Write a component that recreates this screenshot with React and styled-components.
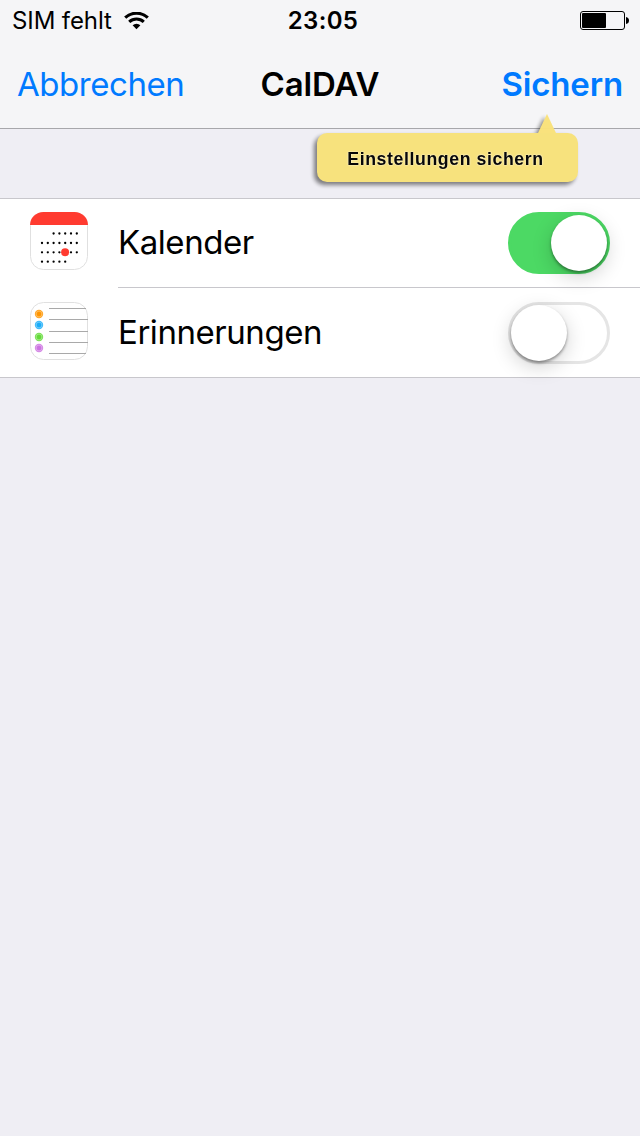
import React, { useState } from 'react';
import styled, { createGlobalStyle } from 'styled-components';

const GlobalStyle = createGlobalStyle`
* {
box-sizing: border-box;
}
body {
margin: 0;
background-color: #EFEEF4;
font-family: Inter, 'Liberation Sans', sans-serif;
color: #000000;
}
`

const Screen = styled.div`
display: flex;
flex-direction: column;
width: 640px;
min-height: 1136px;
background-color: #EFEEF4;
`

const Header = styled.header`
position: relative;
height: 129px;
background-color: #F5F5F7;
border-bottom: 1px solid #A7A7AB;
`

const StatusBar = styled.div`
display: grid;
grid-template-columns: 1fr auto 1fr;
align-items: center;
height: 40px;
padding: 0 11px 0 12px;
`

const Carrier = styled.div`
display: flex;
align-items: center;
gap: 12px;
padding-top: 1px;
font-size: 24px;
line-height: 40px;
letter-spacing: -0.1px;
`

const Clock = styled.div`
padding: 1px 0 0 5px;
font-size: 24px;
font-weight: 580;
line-height: 40px;
letter-spacing: 0.35px;
`

const Battery = styled.svg`
justify-self: end;
`

const NavBar = styled.nav`
display: grid;
grid-template-columns: 1fr auto 1fr;
align-items: center;
height: 88px;
padding: 0 17px;
`

const NavButton = styled.button`
justify-self: ${props => props.$end ? 'end' : 'start'};
padding: 0;
border: 0;
background: none;
color: #007AFF;
font-family: inherit;
font-size: 33px;
font-weight: ${props => props.$end ? 600 : 400};
line-height: 40px;
letter-spacing: ${props => props.$end ? '-0.15px' : '-0.45px'};
`

const Title = styled.h1`
margin: 0;
font-size: 33px;
font-weight: 600;
line-height: 40px;
letter-spacing: -0.2px;
`

const Hint = styled.div`
position: absolute;
left: 317px;
top: 114px;
width: 261px;
opacity: 0.97;
filter: drop-shadow(-3px 3px 2px rgba(0, 0, 0, 0.5));
`

const HintArrow = styled.div`
width: 18px;
height: 19px;
margin-left: 221px;
background-color: #FAE27A;
clip-path: polygon(50% 0, 100% 100%, 0 100%);
`

const HintBody = styled.div`
height: 49px;
padding-right: 4px;
border-radius: 10px;
background-color: #F8E27A;
font-family: 'Liberation Sans', Arial, sans-serif;
font-size: 17.7px;
font-weight: bold;
line-height: 53px;
letter-spacing: 0.6px;
text-align: center;
text-shadow: 0 0 2px #FFFFFF;
`

const List = styled.div`
margin-top: 69px;
background-color: #FFFFFF;
border-top: 1px solid #C8C7CC;
border-bottom: 1px solid #C8C7CC;
`

const Row = styled.div`
display: flex;
align-items: stretch;
height: 89px;
padding-left: 30px;
`

const RowIcon = styled.svg`
flex: none;
margin-top: ${props => props.$top};
`

const RowContent = styled.div`
display: flex;
flex: 1;
justify-content: space-between;
align-items: center;
margin-left: 30px;
padding-right: 30px;
border-bottom: ${props => props.$last ? 'none' : '1px solid #C8C7CC'};
`

const RowLabel = styled.span`
padding-bottom: 2px;
font-size: 33px;
line-height: 40px;
letter-spacing: -0.45px;
`

const Switch = styled.button`
display: flex;
align-items: center;
justify-content: ${props => props.$on ? 'flex-end' : 'flex-start'};
width: 102px;
height: 62px;
padding: 0;
border: 3px solid ${props => props.$on ? '#4CD964' : '#E5E5E5'};
border-radius: 31px;
background-color: ${props => props.$on ? '#4CD964' : '#FFFFFF'};
`

const Knob = styled.span`
width: 56px;
height: 56px;
border-radius: 50%;
background-color: #FFFFFF;
box-shadow: 0 6px 20px rgba(0, 0, 0, 0.18), 0 2px 3px rgba(0, 0, 0, 0.38);
`

// [row y, first column, number of dots]
const dotRows = [
    [21.5, 2, 5],
    [31, 0, 7],
    [40.3, 0, 7],
    [49.7, 0, 5]
];

const reminders = [
    { y: 12, color: '#FF9500' },
    { y: 23, color: '#1BADF8' },
    { y: 35, color: '#63DA38' },
    { y: 46, color: '#CC73E1' }
];

function WifiIcon() {
    return (
        <svg width="25" height="18" viewBox="0 0 25 18">
            <path d="M1.2 5.7 A16.4 16.4 0 0 1 23.8 5.7" fill="none" stroke="#000" strokeWidth="3.1" />
            <path d="M5.2 9.9 A10.6 10.6 0 0 1 19.8 9.9" fill="none" stroke="#000" strokeWidth="3" />
            <path d="M12.5 17.3 L8.6 13.3 A5.7 5.7 0 0 1 16.4 13.3 Z" />
        </svg>
    )
}

function BatteryIcon() {
    return (
        <Battery width="49" height="19" viewBox="0 0 49 19">
            <rect x="0.5" y="0.5" width="44" height="18" rx="2.5" fill="none" stroke="#000" />
            <rect x="2" y="2" width="24" height="15" rx="1" />
            <path d="M46 6 Q49 6.5 49 9.5 Q49 12.5 46 13 Z" />
        </Battery>
    )
}

function CalendarIcon() {
    return (
        <RowIcon $top="13px" width="58" height="58" viewBox="0 0 58 58">
            <rect x="0.5" y="0.5" width="57" height="57" rx="13" fill="#FFF" stroke="#E0E0E0" />
            <path d="M0 13 A13.5 13 0 0 1 13.5 0 H44.5 A13.5 13 0 0 1 58 13 Z" fill="#FF3B30" />
            {dotRows.map(([y, start, count]) => (
                Array.from({ length: count }, (_, i) => (
                    <circle key={`${y}-${i}`} cx={12 + (start + i) * 5.8} cy={y} r="1.15" />
                ))
            ))}
            <circle cx="35.1" cy="40.2" r="4" fill="#FF3B30" />
        </RowIcon>
    )
}

function RemindersIcon() {
    return (
        <RowIcon $top="14px" width="58" height="58" viewBox="0 0 58 58">
            <rect x="0.5" y="0.5" width="57" height="57" rx="13" fill="#FFF" stroke="#E0E0E0" />
            <path d="M19 6.5 H56 M19 17.5 H58 M19 29.5 H58 M19 40.5 H58 M19 51.5 H56" stroke="#A9A9A9" />
            {reminders.map(item => (
                <g key={item.y} fill={item.color}>
                    <circle cx="9" cy={item.y} r="4.2" fillOpacity="0.85" />
                    <circle cx="9" cy={item.y} r="2.9" fill="none" stroke="#FFF" strokeOpacity="0.35" strokeWidth="0.7" />
                    <circle cx="9" cy={item.y} r="2.2" />
                </g>
            ))}
        </RowIcon>
    )
}

function App() {

    const [services, setServices] = useState({
        calendar: true,
        reminders: false
    });

    const toggle = (name) => {
        setServices({...services, [name]: !services[name]})
    }

    return (
        <Screen>
            <GlobalStyle />
            <Header>
                <StatusBar>
                    <Carrier>SIM fehlt <WifiIcon /></Carrier>
                    <Clock>23:05</Clock>
                    <BatteryIcon />
                </StatusBar>
                <NavBar>
                    <NavButton>Abbrechen</NavButton>
                    <Title>CalDAV</Title>
                    <NavButton $end>Sichern</NavButton>
                </NavBar>
                <Hint>
                    <HintArrow />
                    <HintBody>Einstellungen sichern</HintBody>
                </Hint>
            </Header>
            <List>
                <Row>
                    <CalendarIcon />
                    <RowContent>
                        <RowLabel>Kalender</RowLabel>
                        <Switch $on={services.calendar} onClick={() => toggle('calendar')} aria-label="Kalender">
                            <Knob />
                        </Switch>
                    </RowContent>
                </Row>
                <Row>
                    <RemindersIcon />
                    <RowContent $last>
                        <RowLabel>Erinnerungen</RowLabel>
                        <Switch $on={services.reminders} onClick={() => toggle('reminders')} aria-label="Erinnerungen">
                            <Knob />
                        </Switch>
                    </RowContent>
                </Row>
            </List>
        </Screen>
    )
}

export default App;
